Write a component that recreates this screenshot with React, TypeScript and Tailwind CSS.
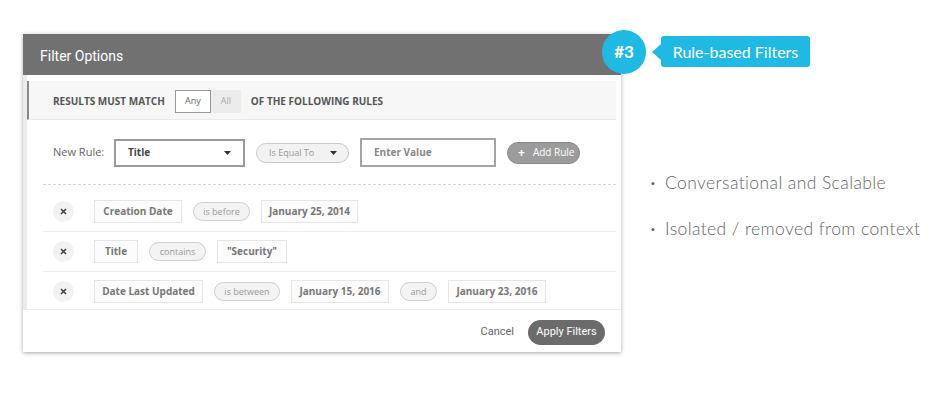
import React from 'react';

const Caret = () => (
  <svg width="7" height="4" viewBox="0 0 7 4" className="shrink-0">
    <path d="M0 0h7L3.5 4z" fill="#333" />
  </svg>
);

const Box = ({ children, w }: { children: React.ReactNode; w: string }) => (
  <div className={`h-[23px] ${w} flex items-center justify-center border border-[#e6e6e6] bg-[#fcfcfc] text-[10px] font-bold text-[#777]`}>
    {children}
  </div>
);

const Pill = ({ children, w }: { children: React.ReactNode; w: string }) => (
  <div className={`h-[19px] ${w} flex items-center justify-center rounded-full border border-[#cfcfcf] bg-[#f3f3f3] text-[9px] text-[#999]`}>
    {children}
  </div>
);

const Remove = () => (
  <div className="ml-[10px] mr-[20px] flex h-[21px] w-[21px] items-center justify-center rounded-full bg-[#f2f2f2]">
    <svg width="7" height="7" viewBox="0 0 7 7">
      <path d="M1 1l5 5M6 1L1 6" stroke="#444" strokeWidth="1.6" />
    </svg>
  </div>
);

export default function App() {
  return (
    <div className="relative flex h-[393px] w-[941px] bg-white" style={{ fontFamily: '"Open Sans", sans-serif' }}>
      <div className="ml-[23px] mt-[34px] flex h-[318px] w-[598px] flex-col bg-white shadow-[0_1px_4px_rgba(0,0,0,0.35)]">
        <div className="flex h-[41px] items-center bg-[#717171] pl-[17px] pt-[3px] text-[14px] text-white" style={{ fontFamily: 'Roboto, sans-serif' }}>
          Filter Options
        </div>
        <div className="flex h-[235px] flex-col border-b border-l-4 border-[#ececec] pr-[5px] pt-[6px]">
          <div className="flex h-[39px] shrink-0 items-center border-b border-l-2 border-b-[#ebebeb] border-l-[#8a8a8a] bg-[#f7f7f7] pl-[24px] pt-[2px] text-[10px] font-bold text-[#555]">
            <span>RESULTS MUST MATCH</span>
            <div className="ml-[10px] flex h-[23px]">
              <div className="flex w-[36px] items-center justify-center border border-[#999] bg-white text-[9px] font-normal text-[#666]">Any</div>
              <div className="flex w-[30px] items-center justify-center bg-[#ececec] text-[9px] font-normal text-[#aaa]">All</div>
            </div>
            <span className="ml-[10px]">OF THE FOLLOWING RULES</span>
          </div>
          <div className="ml-[16px] flex h-[65px] shrink-0 items-center border-b border-dashed border-[#d6d6d6] pl-[10px] pt-[1px]">
            <span className="w-[61px] text-[11px] text-[#666]">New Rule:</span>
            <div className="flex h-[28px] w-[131px] items-center justify-between border-2 border-[#9a9a9a] bg-white pl-[12px] pr-[12px] text-[10px] font-bold text-[#444]">
              Title <Caret />
            </div>
            <div className="ml-[11px] flex h-[20px] w-[93px] items-center justify-between rounded-full border border-[#c9c9c9] bg-[#f2f2f2] pl-[12px] pr-[11px] text-[9px] text-[#999]">
              Is Equal To <Caret />
            </div>
            <div className="ml-[11px] flex h-[29px] w-[136px] items-center border-2 border-[#a5a5a5] bg-white pl-[12px] text-[10px] font-bold text-[#888]">
              Enter Value
            </div>
            <div className="ml-[11px] flex h-[22px] w-[73px] items-center rounded-full border border-[#888] bg-[#9c9c9c] pl-[10px] text-[10px] text-white">
              <span className="mr-[8px] text-[12px] font-bold leading-none">+</span>Add Rule
            </div>
          </div>
          <div className="ml-[16px] flex min-h-0 flex-1 flex-col overflow-hidden pt-[7px]">
            <div className="flex h-[40px] shrink-0 items-center gap-[11px] border-b border-[#efefef]">
              <Remove />
              <Box w="w-[88px] -ml-[11px]">Creation Date</Box>
              <Pill w="w-[57px]">is before</Pill>
              <Box w="w-[97px]">January 25, 2014</Box>
            </div>
            <div className="flex h-[40px] shrink-0 items-center gap-[11px] border-b border-[#efefef]">
              <Remove />
              <Box w="w-[44px] -ml-[11px]">Title</Box>
              <Pill w="w-[57px]">contains</Pill>
              <Box w="w-[70px]">"Security"</Box>
            </div>
            <div className="flex h-[39px] shrink-0 items-center gap-[11px]">
              <Remove />
              <Box w="w-[109px] -ml-[11px]">Date Last Updated</Box>
              <Pill w="w-[66px]">is between</Pill>
              <Box w="w-[98px]">January 15, 2016</Box>
              <Pill w="w-[37px]">and</Pill>
              <Box w="w-[98px]">January 23, 2016</Box>
            </div>
          </div>
        </div>
        <div className="flex flex-1 items-center justify-end pr-[16px] pt-[2px]" style={{ fontFamily: 'Roboto, sans-serif' }}>
          <span className="mr-[14px] text-[11px] text-[#666]">Cancel</span>
          <div className="flex h-[25px] w-[77px] items-center justify-center rounded-full bg-[#6b6b6b] text-[11px] text-white">Apply Filters</div>
        </div>
      </div>

      <div className="absolute left-[602px] top-[30px] flex h-[44px] w-[44px] items-center justify-center rounded-full bg-[#1fb9e4] text-[17px] font-bold text-white" style={{ fontFamily: 'Lato, sans-serif' }}>
        #3
      </div>
      <div className="absolute left-[661px] top-[36px] flex h-[31px] w-[149px] items-center justify-center rounded-[3px] bg-[#1fb9e4] text-[16px] text-white" style={{ fontFamily: 'Lato, sans-serif' }}>
        <div className="absolute left-[-9px] top-[8px] h-0 w-0 border-y-[8px] border-r-[9px] border-y-transparent border-r-[#1fb9e4]" />
        Rule-based Filters
      </div>

      <div className="ml-[29px] flex flex-col gap-[20px] pt-[170px] text-[17.5px] font-light tracking-[0.4px] text-[#666]" style={{ fontFamily: 'Lato, sans-serif' }}>
        <div className="flex items-center"><span className="w-[15px] text-[10px]">•</span>Conversational and Scalable</div>
        <div className="flex items-center"><span className="w-[15px] text-[10px]">•</span>Isolated / removed from context</div>
      </div>
    </div>
  );
}
